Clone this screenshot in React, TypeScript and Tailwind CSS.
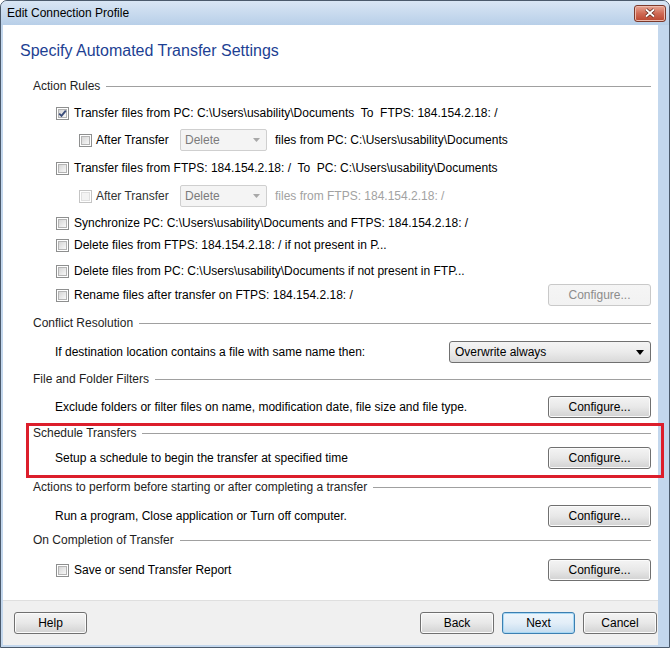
import clsx from "clsx";

type CheckProps = { checked?: boolean; disabled?: boolean };

function Check({ checked, disabled }: CheckProps) {
  return (
    <span
      className={clsx(
        "flex h-[13px] w-[13px] shrink-0 items-center justify-center border bg-white",
        disabled ? "border-[#c4c4c4]" : "border-[#8e8f8f]"
      )}
    >
      <span
        className={clsx(
          "relative flex h-[9px] w-[9px] items-center justify-center border",
          disabled
            ? "border-[#e0e0e0] bg-[#f3f3f3]"
            : "border-[#b4b4b4] bg-linear-to-br from-[#d6d6d6] to-[#f8f8f8]"
        )}
      >
        {checked && (
          <svg width="11" height="11" viewBox="0 0 11 11" className="absolute -left-[2px] -top-[2px]">
            <path d="M2.2 5.6 L4.5 7.9 L8.8 2.6" fill="none" stroke="#3b4d7a" strokeWidth="1.9" />
          </svg>
        )}
      </span>
    </span>
  );
}

function Section({ title }: { title: string }) {
  return (
    <div className="flex h-[22px] items-center text-[#1e1e1e]">
      <span>{title}</span>
      <span className="ml-[6px] h-px flex-1 bg-[#a0a0a0]" />
    </div>
  );
}

function Button({ label, disabled, primary, className }: { label: string; disabled?: boolean; primary?: boolean; className?: string }) {
  return (
    <button
      className={clsx(
        "flex h-[22px] items-center justify-center rounded-[3px] border bg-linear-to-b text-[12px]",
        disabled
          ? "border-[#c9c9c9] from-[#f5f5f5] to-[#f2f2f2] text-[#8c8c8c]"
          : primary
            ? "border-[#3c7fb1] from-[#eef6fc] via-[#e3eef8] to-[#c4dcef] text-black shadow-[inset_0_0_0_1px_#a8d8f4]"
            : "border-[#707070] from-[#f4f4f4] via-[#e8e8e8] to-[#d2d2d2] text-black shadow-[inset_0_0_0_1px_#fbfbfb]",
        className
      )}
    >
      {label}
    </button>
  );
}

function SmallCombo() {
  return (
    <div className="flex h-[22px] w-[87px] items-stretch rounded-[2px] border border-[#cfcfcf] bg-[#f4f4f4]">
      <span className="flex flex-1 items-center pl-[4px] text-[#7b7b7b]">Delete</span>
      <span className="flex w-[19px] items-center justify-center">
        <svg width="7" height="4" viewBox="0 0 7 4">
          <path d="M0 0 H7 L3.5 4 Z" fill="#a8a8a8" />
        </svg>
      </span>
    </div>
  );
}

export default function App() {
  return (
    <div className="relative h-[648px] w-[670px] font-['Liberation_Sans',Arial,sans-serif] text-[12px]">
      <div className="flex h-full w-full flex-col overflow-hidden rounded-t-[7px] border border-[#4b5a6c] bg-[#c3d7ed]">
        <div className="flex h-[24px] shrink-0 items-center justify-between bg-linear-to-b from-[#d9e6f4] to-[#b8cfe8] pl-[6px] pr-[3px]">
          <span className="text-[12px] text-black">Edit Connection Profile</span>
          <span className="flex h-[17px] w-[32px] items-center justify-center rounded-[3px] border border-[#7c3a2c] bg-linear-to-b from-[#e6a594] via-[#cf6a55] to-[#b9452f] shadow-[inset_0_0_0_1px_#eebbad]">
            <svg width="12" height="10" viewBox="0 0 12 10">
              <path d="M2 1.5 L10 8.5 M10 1.5 L2 8.5" stroke="#5a2218" strokeWidth="3.2" />
              <path d="M2 1.5 L10 8.5 M10 1.5 L2 8.5" stroke="#ffffff" strokeWidth="1.8" />
            </svg>
          </span>
        </div>

        <div className="mb-[2px] ml-[2px] mr-[11px] flex flex-1 flex-col">
          <div className="flex flex-1 flex-col bg-white pr-[7px] pt-[15px]">
            <div className="flex h-[22px] items-center pl-[17px] text-[16px] text-[#1d3f93]">
              Specify Automated Transfer Settings
            </div>

            <div className="flex flex-col pl-[30px]">
              <div className="mt-[13px]">
                <Section title="Action Rules" />
              </div>

              <div className="mt-[5px] flex h-[22px] items-center gap-[5px] pl-[23px]">
                <Check checked />
                <span>Transfer files from PC: C:\Users\usability\Documents&nbsp; To&nbsp; FTPS: 184.154.2.18: /</span>
              </div>
              <div className="mt-[5px] flex h-[22px] items-center pl-[46px]">
                <Check />
                <span className="ml-[4px] w-[84px]">After Transfer</span>
                <SmallCombo />
                <span className="ml-[8px]">files from PC: C:\Users\usability\Documents</span>
              </div>
              <div className="mt-[6px] flex h-[22px] items-center gap-[5px] pl-[23px]">
                <Check />
                <span>Transfer files from FTPS: 184.154.2.18: /&nbsp; To&nbsp; PC: C:\Users\usability\Documents</span>
              </div>
              <div className="mt-[6px] flex h-[22px] items-center pl-[46px]">
                <Check disabled />
                <span className="ml-[4px] w-[84px] text-[#333]">After Transfer</span>
                <SmallCombo />
                <span className="ml-[8px] text-[#a2a2a2]">files from FTPS: 184.154.2.18: /</span>
              </div>
              <div className="mt-[5px] flex h-[22px] items-center gap-[5px] pl-[23px]">
                <Check />
                <span>Synchronize PC: C:\Users\usability\Documents and FTPS: 184.154.2.18: /</span>
              </div>
              <div className="flex h-[22px] items-center gap-[5px] pl-[23px]">
                <Check />
                <span>Delete files from FTPS: 184.154.2.18: / if not present in P...</span>
              </div>
              <div className="mt-[4px] flex h-[22px] items-center gap-[5px] pl-[23px]">
                <Check />
                <span>Delete files from PC: C:\Users\usability\Documents if not present in FTP...</span>
              </div>
              <div className="mt-[2px] flex h-[22px] items-center gap-[5px] pl-[23px]">
                <Check />
                <span className="flex-1">Rename files after transfer on FTPS: 184.154.2.18: /</span>
                <Button label="Configure..." disabled className="w-[103px]" />
              </div>

              <div className="mt-[6px]">
                <Section title="Conflict Resolution" />
              </div>
              <div className="mt-[7px] flex h-[22px] items-center pl-[22px]">
                <span className="flex-1">If destination location contains a file with same name then:</span>
                <div className="flex h-[22px] w-[202px] items-center justify-between rounded-[3px] border border-[#707070] bg-linear-to-b from-[#f4f4f4] via-[#ebebeb] to-[#d9d9d9] pl-[5px] pr-[6px]">
                  <span>Overwrite always</span>
                  <svg width="8" height="5" viewBox="0 0 8 5">
                    <path d="M0 0 H8 L4 5 Z" fill="#000" />
                  </svg>
                </div>
              </div>

              <div className="mt-[5px]">
                <Section title="File and Folder Filters" />
              </div>
              <div className="mt-[6px] flex h-[22px] items-center pl-[22px]">
                <span className="flex-1">Exclude folders or filter files on name, modification date, file size and file type.</span>
                <Button label="Configure..." className="w-[103px]" />
              </div>

              <div className="mt-[4px]">
                <Section title="Schedule Transfers" />
              </div>
              <div className="mt-[3px] flex h-[22px] items-center pl-[22px]">
                <span className="flex-1">Setup a schedule to begin the transfer at specified time</span>
                <Button label="Configure..." className="w-[103px]" />
              </div>

              <div className="mt-[7px]">
                <Section title="Actions to perform before starting or after completing a transfer" />
              </div>
              <div className="mt-[7px] flex h-[22px] items-center pl-[22px]">
                <span className="flex-1">Run a program, Close application or Turn off computer.</span>
                <Button label="Configure..." className="w-[103px]" />
              </div>

              <div className="mt-[2px]">
                <Section title="On Completion of Transfer" />
              </div>
              <div className="mt-[8px] flex h-[22px] items-center gap-[5px] pl-[23px]">
                <Check />
                <span className="flex-1">Save or send Transfer Report</span>
                <Button label="Configure..." className="w-[103px]" />
              </div>
            </div>
          </div>

          <div className="flex h-[45px] shrink-0 items-start border-t border-[#dfdfdf] bg-[#f0f0f0] pl-[11px] pr-[1px] pt-[11px]">
            <Button label="Help" className="w-[73px]" />
            <div className="flex-1" />
            <div className="flex gap-[8px]">
              <Button label="Back" className="w-[74px]" />
              <Button label="Next" primary className="w-[73px]" />
              <Button label="Cancel" className="w-[74px]" />
            </div>
          </div>
        </div>
      </div>

      <div className="pointer-events-none absolute left-[26px] top-[423px] h-[55px] w-[638px] border-[3px] border-[#dc1e2b]" />
    </div>
  );
}
